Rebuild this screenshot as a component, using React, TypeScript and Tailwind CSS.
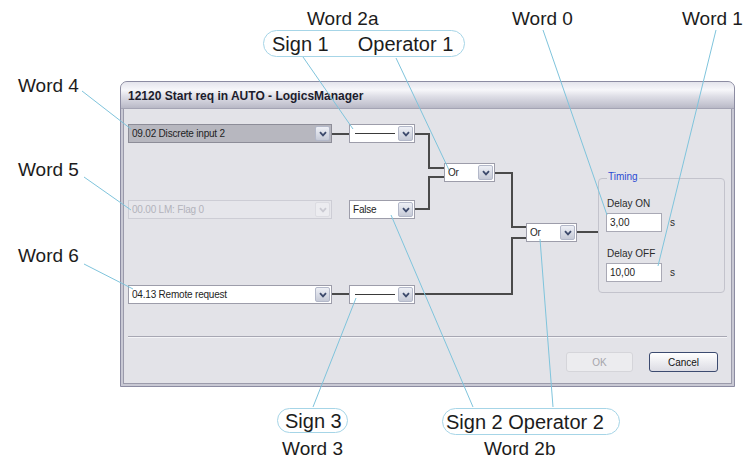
import React from "react";
import clsx from "clsx";

type ComboKind = "normal" | "selected" | "disabled";

// leader lines of the callouts, page coordinates
const leaders = [
  [82, 91, 131, 129],
  [84, 177, 131, 210],
  [84, 264, 133, 289],
  [303, 57, 353, 129],
  [396, 58, 449, 170],
  [543, 30, 607, 215],
  [716, 30, 658, 266],
  [313, 407, 356, 298],
  [473, 407, 391, 215],
  [553, 407, 540, 239],
];

// logic wires, canvas coordinates
const wires = [
  "M208 25 H225",
  "M291 25 H305 V59 H320",
  "M291 100 H305 V68 H320",
  "M371 64 H388 V118 H402",
  "M291 185 H388 V129 H402",
  "M208 185 H225",
  "M453 123 H474",
];

function Chevron({ color }: { color: string }) {
  return (
    <svg width="8" height="6" viewBox="0 0 8 6">
      <path d="M1 1.2 L4 4.4 L7 1.2" fill="none" stroke={color} strokeWidth="1.8" />
    </svg>
  );
}

function Combo({
  className,
  text,
  kind = "normal",
  dash = false,
}: {
  className: string;
  text?: string;
  kind?: ComboKind;
  dash?: boolean;
}) {
  const box =
    kind === "selected"
      ? "bg-[#b7b7bf] border-[#8d8d98] text-[#1e1e24]"
      : kind === "disabled"
      ? "bg-[#e6e6eb] border-[#cdcdd5] text-[#b3b3bb]"
      : "bg-white border-[#9d9daa] text-[#1e1e24]";
  const btn =
    kind === "disabled"
      ? "border-[#dcdce2] bg-[#ececf0]"
      : "border-[#b3b8c9] bg-gradient-to-b from-[#eef0f6] to-[#c6cad7]";

  return (
    <div className={clsx("absolute h-[19px] border flex items-center", box, className)}>
      <div className="flex-1 min-w-0 pl-[3px] text-[10px] tracking-[-0.2px] leading-none whitespace-nowrap">
        {dash ? <div className="h-px bg-[#3a3a3a] ml-[2px] mr-[3px]" /> : text}
      </div>
      <div
        className={clsx(
          "w-[15px] h-[15px] mr-[1px] rounded-[2px] border flex items-center justify-center",
          btn
        )}
      >
        <Chevron color={kind === "disabled" ? "#cacad2" : "#3d4a6c"} />
      </div>
    </div>
  );
}

function Field({ value }: { value: string }) {
  return (
    <div className="flex items-center gap-[8px] mt-[4px]">
      <div className="h-[19px] w-[56px] bg-white border border-[#a9a9b5] flex items-center pl-[3px] text-[10px] leading-none text-[#1e1e24]">
        {value}
      </div>
      <span className="text-[10px] leading-none text-[#2a2a2a]">s</span>
    </div>
  );
}

function Pill({ children, className }: { children: React.ReactNode; className: string }) {
  return (
    <div
      className={clsx(
        "rounded-full border-[1.5px] border-[#a6d5e7] bg-white flex items-center text-[20px] leading-none",
        className
      )}
    >
      {children}
    </div>
  );
}

export default function App() {
  return (
    <div className="relative w-[754px] h-[461px] bg-white overflow-hidden font-['Liberation_Sans','Arial',sans-serif] text-[#1c1c1c]">
      {/* dialog */}
      <div className="ml-[120px] mt-[81px] w-[615px] h-[306px] border border-[#8c8ca2] rounded-t-[7px] flex flex-col bg-[#c9c9d4]">
        <div className="h-[27px] rounded-t-[6px] flex items-center pl-[7px] pt-[2px] border-b border-[#a4a4b4] bg-[linear-gradient(to_bottom,#e4e4ec_0%,#f7f7fa_30%,#dedee6_55%,#c6c6d2_85%,#b8b8c6_100%)]">
          <span className="text-[12px] font-bold text-[#1c1c2c] leading-none">
            12120 Start req in AUTO - LogicsManager
          </span>
        </div>

        <div className="flex-1 px-[2px] pb-[2px] flex">
          <div className="flex-1 border-x border-b border-[#9b9bab] bg-[#e3e3e8] flex flex-col">
            {/* logic diagram */}
            <div className="relative h-[227px]">
              <svg className="absolute inset-0" width="607" height="227">
                {wires.map((d) => (
                  <path key={d} d={d} fill="none" stroke="#4a4a4a" strokeWidth="2" />
                ))}
              </svg>

              <Combo className="left-[4px] top-[15px] w-[204px]" text="09.02 Discrete input 2" kind="selected" />
              <Combo className="left-[225px] top-[15px] w-[66px]" dash />

              <Combo className="left-[320px] top-[54px] w-[51px]" text="Or" />

              <Combo className="left-[4px] top-[91px] w-[204px]" text="00.00 LM: Flag 0" kind="disabled" />
              <Combo className="left-[225px] top-[91px] w-[66px]" text="False" />

              <Combo className="left-[402px] top-[114px] w-[51px]" text="Or" />

              <Combo className="left-[4px] top-[176px] w-[204px]" text="04.13 Remote request" />
              <Combo className="left-[225px] top-[176px] w-[66px]" dash />

              {/* timing group */}
              <div className="absolute left-[474px] top-[69px] w-[127px] h-[115px] border border-[#c3c3cc] rounded-[4px] flex flex-col pl-[7px] pt-[20px] text-[10px] leading-none text-[#2a2a2a]">
                <span className="absolute -top-[7px] left-[8px] px-[1px] bg-[#e3e3e8] text-[#2b4bd3]">
                  Timing
                </span>
                <span className="ml-[1px]">Delay ON</span>
                <Field value="3,00" />
                <span className="ml-[1px] mt-[17px]">Delay OFF</span>
                <Field value="10,00" />
              </div>
            </div>

            <div className="mx-[4px] h-px bg-[#a7a7b3]" />
            <div className="h-px mx-[4px] bg-[#f4f4f7]" />

            <div className="flex justify-end gap-[16px] pt-[14px] pr-[13px]">
              <button
                type="button"
                className="w-[67px] h-[20px] rounded-[3px] border border-[#d5d5da] bg-[#ececef] text-[10px] text-[#a6a6ac]"
              >
                OK
              </button>
              <button
                type="button"
                className="w-[69px] h-[20px] rounded-[3px] border border-[#3c4b70] bg-gradient-to-b from-white to-[#dcdce4] text-[10px] text-[#111]"
              >
                Cancel
              </button>
            </div>
          </div>
        </div>
      </div>

      {/* callouts */}
      <span className="absolute left-[18px] top-[76px] text-[19px] leading-none">Word 4</span>
      <span className="absolute left-[18px] top-[160px] text-[19px] leading-none">Word 5</span>
      <span className="absolute left-[18px] top-[246px] text-[19px] leading-none">Word 6</span>

      <span className="absolute left-[307px] top-[9px] text-[19px] leading-none">Word 2a</span>
      <span className="absolute left-[512px] top-[9px] text-[19px] leading-none">Word 0</span>
      <span className="absolute left-[682px] top-[9px] text-[19px] leading-none">Word 1</span>

      <Pill className="absolute left-[263px] top-[30px] w-[202px] h-[27px] gap-[29px] pl-[8px]">
        <span>Sign 1</span>
        <span>Operator 1</span>
      </Pill>

      <div className="absolute left-[277px] top-[408px] flex flex-col items-center gap-[6px]">
        <Pill className="w-[71px] h-[25px] pl-[7px]">Sign 3</Pill>
        <span className="text-[19px] leading-none">Word 3</span>
      </div>

      <div className="absolute left-[442px] top-[408px] flex flex-col gap-[4px]">
        <Pill className="w-[178px] h-[27px] pl-[3px]">Sign 2 Operator 2</Pill>
        <span className="ml-[42px] text-[19px] leading-none">Word 2b</span>
      </div>

      <svg className="absolute inset-0 pointer-events-none" width="754" height="461">
        {leaders.map(([x1, y1, x2, y2]) => (
          <line key={`${x1}-${y1}`} x1={x1} y1={y1} x2={x2} y2={y2} stroke="#7fc4dc" strokeWidth="1" />
        ))}
      </svg>
    </div>
  );
}
